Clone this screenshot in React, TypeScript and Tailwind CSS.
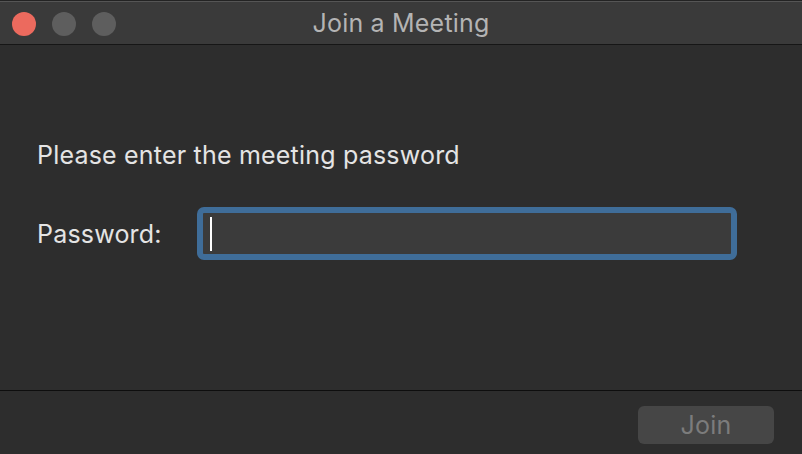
import React from 'react'

export default function App() {
  return (
    <div
      className="w-[802px] h-[454px] flex flex-col bg-[#2d2d2d] overflow-hidden"
      style={{ fontFamily: 'Inter, "Noto Sans", sans-serif' }}
    >
      {/* title bar */}
      <div className="relative h-[45px] shrink-0 bg-[#3a3a3a] border-t border-t-[#232323] border-b border-b-[#161616]">
        <div className="h-full border-t border-t-[#555555] flex items-center">
          <div className="flex items-center gap-[16px] pl-[12px] pt-[2px]">
            <span className="w-[24px] h-[24px] rounded-full bg-[#ec6a5e]" />
            <span className="w-[24px] h-[24px] rounded-full bg-[#5e5e5e]" />
            <span className="w-[24px] h-[24px] rounded-full bg-[#5e5e5e]" />
          </div>
        </div>
        <div className="absolute inset-0 flex items-center justify-center pt-[3px] text-[25px] tracking-[0.2px] text-[#b4b4b4]">
          Join a Meeting
        </div>
      </div>

      {/* body */}
      <div className="flex-1 flex flex-col pl-[37px] pt-[95px]">
        <p className="text-[25px] leading-[30px] tracking-[0.2px] text-[#e4e4e4]">Please enter the meeting password</p>
        <div className="flex items-center mt-[37px]">
          <span className="w-[160px] pt-[3px] text-[25px] tracking-[0.2px] text-[#e4e4e4]">Password:</span>
          <div className="w-[540px] h-[53px] rounded-[7px] border-[6px] border-[#3f6d99] bg-[#3b3b3b] flex items-center pl-[7px]">
            <span className="w-[2px] h-[34px] bg-white" />
          </div>
        </div>
      </div>

      {/* footer */}
      <div className="h-[64px] shrink-0 border-t border-t-[#0e0e0e] flex items-start justify-end pr-[28px] pt-[15px]">
        <button className="w-[136px] h-[38px] rounded-[6px] bg-[#464646] text-[25px] leading-none tracking-[0.2px] text-[#7c7c7c]">Join</button>
      </div>
    </div>
  )
}
